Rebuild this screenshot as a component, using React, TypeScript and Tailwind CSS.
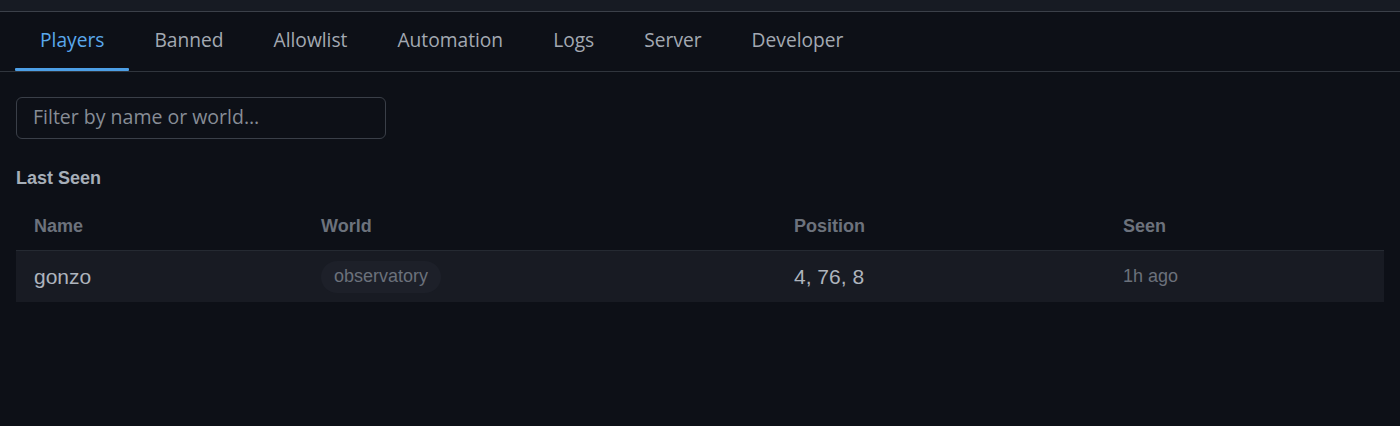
import React from "react";

const tabs = ["Players", "Banned", "Allowlist", "Automation", "Logs", "Server", "Developer"];

export default function App() {
  return (
    <div className="w-[1400px] h-[426px] bg-[#0d1017] overflow-hidden" style={{ fontFamily: '"Liberation Sans", Arial, sans-serif' }}>
      <div className="h-[11px] bg-[#171b23]" />
      <div className="h-[1px] bg-[#3b4049]" />
      <div className="flex px-[15px] border-b border-[#30353d] h-[60px]" style={{ fontFamily: '"Open Sans", sans-serif' }}>
        {tabs.map((t, i) => (
          <div
            key={t}
            className={
              "relative flex items-center px-[25px] text-[19.2px] " +
              (i === 0 ? "text-[#5aa8ec]" : "text-[#a3a9b2]")
            }
          >
            <span className="-mt-[3px]">{t}</span>
            {i === 0 && <div className="absolute left-0 right-0 bottom-0 h-[3px] bg-[#4d9fe6] rounded-[1px]" />}
          </div>
        ))}
      </div>
      <div className="px-[16px] pt-[25px]">
        <div className="w-[370px] h-[42px] border border-[#3a3f48] rounded-[6px] flex items-center px-[16px] text-[19.5px] text-[#878d96]" style={{ fontFamily: '"Open Sans", sans-serif' }}>
          <span className="-mt-[2px]">Filter by name or world…</span>
        </div>
        <div className="mt-[29px] text-[18px] font-bold text-[#a6aeb8] leading-[20px]">Last Seen</div>
        <div className="mt-[14px]">
          <div className="grid grid-cols-[287px_473px_329px_279px] h-[48px] items-center text-[18px] font-bold text-[#6c727c]">
            <div className="pl-[18px]">Name</div>
            <div className="pl-[18px]">World</div>
            <div className="pl-[18px]">Position</div>
            <div className="pl-[18px]">Seen</div>
          </div>
          <div className="grid grid-cols-[287px_473px_329px_279px] h-[52px] items-center bg-[#181b23] border-t border-[#252a32]">
            <div className="pl-[18px] text-[21px] text-[#aeb4bd]">gonzo</div>
            <div className="pl-[18px]">
              <span className="inline-flex items-center h-[32px] px-[13px] rounded-full bg-[#1d2029] text-[18px] text-[#6b717b]">observatory</span>
            </div>
            <div className="pl-[18px] text-[21px] text-[#aeb4bd]">4, 76, 8</div>
            <div className="pl-[18px] text-[18px] text-[#6b717b]">1h ago</div>
          </div>
        </div>
      </div>
    </div>
  );
}
